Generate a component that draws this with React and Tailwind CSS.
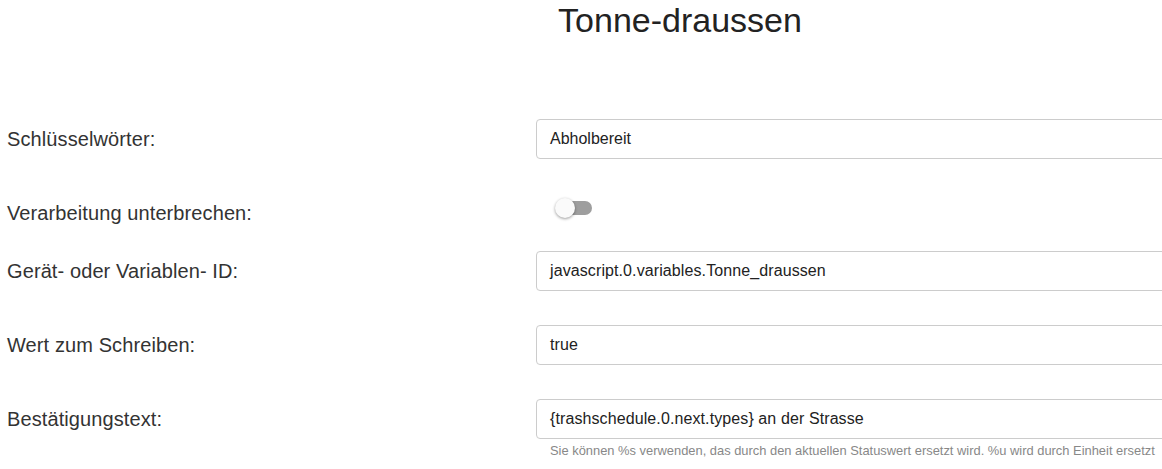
export default function App() {
  const font = { fontFamily: '"Liberation Sans", Arial, sans-serif' };

  return (
    <div className="w-[1162px] h-[469px] overflow-hidden bg-white" style={font}>
      <div className="w-[1360px]">
        <h1 className="text-center text-[34px] leading-[40px] text-[#222] font-normal">
          Tonne-draussen
        </h1>

        <div className="mt-[79px] flex items-center h-10">
          <label className="w-[536px] pl-[7px] text-[20px] tracking-[0.1px] text-[#333]">Schlüsselwörter:</label>
          <div className="flex-1 h-10 flex items-center border border-[#ccc] rounded-[4px] px-[13px] text-[16px] text-[#222]">
            Abholbereit
          </div>
        </div>

        <div className="mt-[34px] flex items-center h-10">
          <label className="w-[536px] pl-[7px] text-[20px] tracking-[0.1px] text-[#333]">Verarbeitung unterbrechen:</label>
          <div className="relative ml-[20px] -mt-[10px] w-[36px] h-[14px] rounded-full bg-[#9e9e9e]">
            <span className="absolute -left-[1px] -top-[3px] w-5 h-5 rounded-full bg-[#fafafa] shadow-[0_1px_3px_rgba(0,0,0,0.4)]" />
          </div>
        </div>

        <div className="mt-[18px] flex items-center h-10">
          <label className="w-[536px] pl-[7px] text-[20px] tracking-[0.1px] text-[#333]">Gerät- oder Variablen- ID:</label>
          <div className="flex-1 h-10 flex items-center border border-[#ccc] rounded-[4px] px-[13px] text-[16px] tracking-[0.1px] text-[#222]">
            javascript.0.variables.Tonne_draussen
          </div>
        </div>

        <div className="mt-[34px] flex items-center h-10">
          <label className="w-[536px] pl-[7px] text-[20px] tracking-[0.1px] text-[#333]">Wert zum Schreiben:</label>
          <div className="flex-1 h-10 flex items-center border border-[#ccc] rounded-[4px] px-[13px] text-[16px] tracking-[0.1px] text-[#222]">
            true
          </div>
        </div>

        <div className="mt-[34px] flex items-center h-10">
          <label className="w-[536px] pl-[7px] text-[20px] tracking-[0.1px] text-[#333]">Bestätigungstext:</label>
          <div className="flex-1 h-10 flex items-center border border-[#ccc] rounded-[4px] px-[13px] text-[16px] tracking-[0.1px] text-[#222]">
            {"{trashschedule.0.next.types} an der Strasse"}
          </div>
        </div>
        <p className="ml-[550px] mt-[5px] text-[12.9px] leading-[14px] text-[#888]">
          Sie können %s verwenden, das durch den aktuellen Statuswert ersetzt wird. %u wird durch Einheit ersetzt
        </p>
      </div>
    </div>
  );
}
